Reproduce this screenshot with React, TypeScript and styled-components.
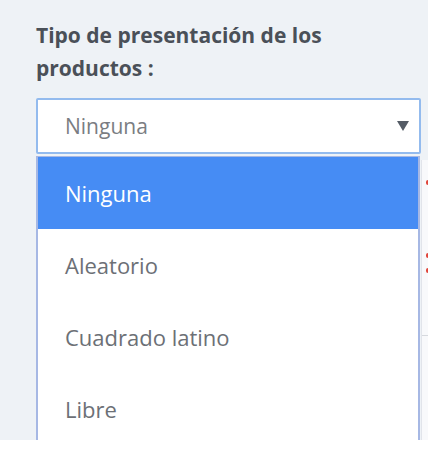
import React from "react";
import styled, { createGlobalStyle } from "styled-components";

const Global = createGlobalStyle`
  html, body { margin: 0; padding: 0; background: #ffffff; }
  body { font-family: "Open Sans", "Noto Sans", sans-serif; }
`;

const Page = styled.div`
  height: 440px;
  background: #eef2f6;
  padding: 19px 0 0 36px;
  box-sizing: border-box;
  overflow: hidden;
  display: grid;
  grid-template-columns: 385px 1fr;
  align-items: start;
`;

const Form = styled.div`
  display: flex;
  flex-direction: column;
`;

const Label = styled.div`
  font-family: "Open Sans", sans-serif;
  font-weight: 700;
  font-size: 21px;
  line-height: 33px;
  color: #4a5058;
  width: 320px;
  letter-spacing: 0;
`;

const Field = styled.div`
  position: relative;
  margin-top: 13px;
`;

const SelectBox = styled.div`
  box-sizing: border-box;
  height: 56px;
  background: #ffffff;
  border: 2px solid #93bbee;
  border-radius: 2px;
  display: flex;
  align-items: center;
  justify-content: space-between;
  padding: 0 10px 0 27px;
  font-size: 21px;
  color: #7a7d82;
`;

const Arrow = styled.span`
  width: 0;
  height: 0;
  border-left: 6px solid transparent;
  border-right: 6px solid transparent;
  border-top: 10px solid #555c66;
`;

const List = styled.ul`
  position: absolute;
  top: 58px;
  left: 0;
  width: 384px;
  box-sizing: border-box;
  margin: 0;
  padding: 0;
  list-style: none;
  background: #ffffff;
  border-left: 2px solid #a6b8e4;
  border-right: 2px solid #a6b8e4;
  border-top: 1px solid #a6b8e4;
`;

const Item = styled.li<{ $active?: boolean }>`
  height: 72px;
  display: flex;
  align-items: center;
  padding-left: 27px;
  font-size: 22px;
  color: ${(p) => (p.$active ? "#ffffff" : "#6c7076")};
  background: ${(p) => (p.$active ? "#468cf4" : "transparent")};
`;

const SidePanel = styled.div`
  margin-top: 141px;
  height: 300px;
  background: #f8f9fb;
  border-left: 1px solid #e1e4ea;
  display: flex;
  flex-direction: column;
  padding: 20px 0 0 4px;
  box-sizing: border-box;
`;

const Mark = styled.span<{ $gap: number }>`
  margin-top: ${(p) => p.$gap}px;
  width: 4px;
  height: 5px;
  border-radius: 2px;
  background: #e0453a;
`;

const Rule = styled.span<{ $gap: number }>`
  margin-top: ${(p) => p.$gap}px;
  margin-left: -4px;
  height: 1px;
  background: #d6d9de;
`;

const options = ["Ninguna", "Aleatorio", "Cuadrado latino", "Libre"];

export default function App() {
  return (
    <>
      <Global />
      <Page>
        <Form>
          <Label>Tipo de presentación de los productos :</Label>
          <Field>
            <SelectBox>
              <span>Ninguna</span>
              <Arrow />
            </SelectBox>
            <List>
              {options.map((o, i) => (
                <Item key={o} $active={i === 0}>
                  {o}
                </Item>
              ))}
            </List>
          </Field>
        </Form>
        <SidePanel>
          <Mark $gap={0} />
          <Mark $gap={68} />
          <Mark $gap={10} />
          <Rule $gap={62} />
        </SidePanel>
      </Page>
    </>
  );
}
